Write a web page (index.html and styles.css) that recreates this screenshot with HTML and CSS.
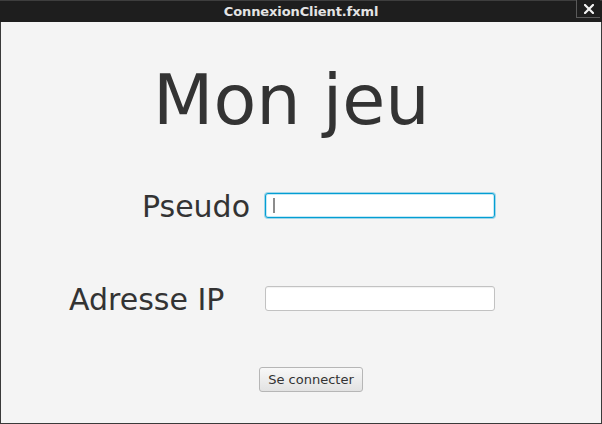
FILE: index.html
```html
<!DOCTYPE html>
<html lang="fr">
<head>
<meta charset="utf-8">
<title>ConnexionClient.fxml</title>
<link rel="stylesheet" href="styles.css">
</head>
<body>
<div class="window">
  <header class="titlebar">
    <span class="spacer"></span>
    <span class="title">ConnexionClient.fxml</span>
    <button class="close" aria-label="Fermer">
      <svg width="10" height="10" viewBox="0 0 10 10"><path d="M1 1 L9 9 M9 1 L1 9" stroke="#f2f2f2" stroke-width="2.2" stroke-linecap="square"/></svg>
    </button>
  </header>
  <main class="content">
    <h1 class="heading">Mon jeu</h1>
    <div class="row row-first">
      <label class="label label-right">Pseudo</label>
      <div class="field focused"><span class="caret"></span></div>
    </div>
    <div class="row row-second">
      <label class="label label-left">Adresse IP</label>
      <div class="field"></div>
    </div>
    <button class="btn">Se connecter</button>
  </main>
</div>
</body>
</html>
```
FILE: styles.css
```css
html, body {
  margin: 0;
  padding: 0;
  background: #f4f4f4;
}
body {
  font-family: "DejaVu Sans", "Liberation Sans", sans-serif;
  color: #333333;
}
.window {
  width: 602px;
  height: 424px;
  display: flex;
  flex-direction: column;
}
.titlebar {
  height: 22px;
  box-sizing: border-box;
  background: #1e1e1e;
  border-top: 1px solid #3e3e3e;
  display: grid;
  grid-template-columns: 1fr auto 1fr;
  align-items: start;
}
.title {
  font-weight: bold;
  font-size: 13px;
  letter-spacing: -0.1px;
  line-height: 21px;
  color: #e4e4e4;
}
.close {
  justify-self: end;
  margin: -1px 2px 0 0;
  width: 24px;
  height: 18px;
  padding: 0;
  background: #1e1e1e;
  border: none;
  border-left: 1px solid #5a5a5a;
  border-bottom: 1px solid #5a5a5a;
  display: flex;
  align-items: center;
  justify-content: center;
}
.content {
  flex: 1;
  box-sizing: border-box;
  border: 1px solid #3a3a3a;
  border-top: none;
  background: #f4f4f4;
  display: flex;
  flex-direction: column;
  align-items: flex-start;
}
.heading {
  margin: 43px 0 0 152px;
  font-size: 70px;
  font-weight: normal;
  line-height: 70px;
  color: #333333;
}
.row {
  display: flex;
  align-items: flex-start;
}
.row-first {
  margin-top: 58px;
}
.row-second {
  margin-top: 67px;
}
.label {
  width: 264px;
  box-sizing: border-box;
  font-size: 30px;
  line-height: 25px;
  padding-top: 1px;
  white-space: nowrap;
}
.label-right {
  text-align: right;
  padding-right: 15px;
}
.label-left {
  text-align: left;
  padding-left: 68px;
}
.field {
  width: 230px;
  height: 25px;
  box-sizing: border-box;
  background: #ffffff;
  border: 1px solid #c2c2c2;
  border-radius: 3px;
  box-shadow: inset 0 1px 1px rgba(0, 0, 0, 0.06);
}
.field.focused {
  border-color: #039ed3;
  box-shadow: 0 0 0 1px rgba(3, 158, 211, 0.35), inset 0 0 0 1px #c4e9f6;
}
.caret {
  display: block;
  width: 2px;
  height: 15px;
  margin: 4px 0 0 7px;
  background: #8c8c8c;
}
.btn {
  margin: 55px 0 0 258px;
  width: 104px;
  height: 25px;
  box-sizing: border-box;
  padding: 0;
  font-family: "DejaVu Sans", "Liberation Sans", sans-serif;
  font-size: 13px;
  color: #333333;
  background: linear-gradient(#f8f8f8, #e2e2e2);
  border: 1px solid #b6b6b6;
  border-radius: 3px;
}
```
